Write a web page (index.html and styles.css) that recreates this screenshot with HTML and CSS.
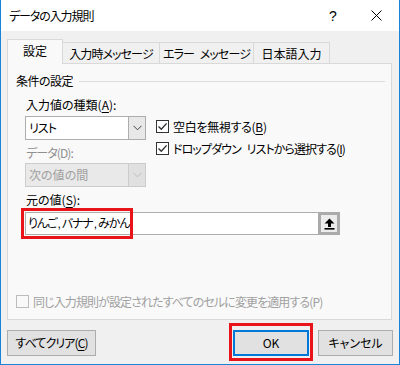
FILE: index.html
```html
<!DOCTYPE html>
<html lang="ja">
<head>
<meta charset="utf-8">
<title>データの入力規則</title>
<link rel="stylesheet" href="styles.css">
</head>
<body>
<div class="window">
  <div class="titlebar">
    <span class="title">データの入力規則</span>
    <span class="help">?</span>
    <span class="close"><svg width="11" height="11" viewBox="0 0 11 11"><path d="M0.5 0.5L10.5 10.5M10.5 0.5L0.5 10.5" stroke="#000" stroke-width="1"/></svg></span>
  </div>
  <div class="content">
    <div class="tabs">
      <div class="tab selected t0">設定</div>
      <div class="tab t1 kana">入力時メッセージ</div>
      <div class="tab t2 kana">エラー メッセージ</div>
      <div class="tab t3">日本語入力</div>
    </div>
    <div class="panel">
      <div class="group-head"><span class="group-text">条件の設定</span><span class="rule"></span></div>
      <div class="conditions">
        <div class="top-row">
          <div class="left-col">
            <div class="label">入力値の種類(<u>A</u>):</div>
            <div class="combo">
              <span class="combo-text kana">リスト</span>
              <span class="combo-btn"><svg width="9" height="6" viewBox="0 0 9 6"><path d="M0.5 0.8L4.5 4.8L8.5 0.8" fill="none" stroke="#444" stroke-width="1"/></svg></span>
            </div>
            <div class="label label-off kana">データ(D):</div>
            <div class="combo combo-off">
              <span class="combo-text">次の値の間</span>
              <span class="combo-btn"><svg width="9" height="6" viewBox="0 0 9 6"><path d="M0.5 0.8L4.5 4.8L8.5 0.8" fill="none" stroke="#bcbcbc" stroke-width="1"/></svg></span>
            </div>
          </div>
          <div class="right-col">
            <div class="check-row">
              <span class="box"><svg width="11" height="11" viewBox="0 0 11 11"><path d="M1.5 5.5L4.3 8.3L9.6 2.4" fill="none" stroke="#333" stroke-width="1.4"/></svg></span>
              <span class="check-text t-blank">空白を無視する(<u>B</u>)</span>
            </div>
            <div class="check-row row2">
              <span class="box"><svg width="11" height="11" viewBox="0 0 11 11"><path d="M1.5 5.5L4.3 8.3L9.6 2.4" fill="none" stroke="#333" stroke-width="1.4"/></svg></span>
              <span class="check-text kana">ドロップダウン リストから選択する(<u>I</u>)</span>
            </div>
          </div>
        </div>
        <div class="label label-src">元の値(<u>S</u>):</div>
        <div class="source-row">
          <div class="source-input"><span class="source-text kana">りんご<span class="comma">,</span>バナナ<span class="comma">,</span>みかん</span><span class="caret"></span></div>
          <div class="pick-btn"><svg width="11" height="12" viewBox="0 0 11 12"><path d="M5.5 0.5L10.5 5.5H7V9H4V5.5H0.5Z" fill="#000"/><rect x="0.5" y="10" width="10" height="1.6" fill="#000"/></svg></div>
          <div class="mark mark-src"></div>
        </div>
      </div>
      <div class="apply-row">
        <span class="box box-off"></span>
        <span class="apply-text kana">同じ入力規則が設定されたすべてのセルに変更を適用する(P)</span>
      </div>
    </div>
    <div class="buttons">
      <div class="btn btn-clear kana">すべてクリア(<u>C</u>)</div>
      <div class="spacer"></div>
      <div class="btn btn-ok">OK<div class="mark mark-ok"></div></div>
      <div class="btn btn-cancel">キャンセル</div>
    </div>
  </div>
</div>
</body>
</html>
```
FILE: styles.css
```css
* { box-sizing: border-box; }
html, body { margin: 0; padding: 0; background: #f0f0f0; }
body {
  font-family: "Noto Sans CJK JP", "Noto Sans", sans-serif;
  font-size: 12px;
  font-feature-settings: "palt";
  color: #000;
}
u { text-decoration-thickness: 1px; text-underline-offset: 2px; }
.kana { letter-spacing: -0.9px; word-spacing: 4px; }

.window {
  width: 400px;
  height: 365px;
  border: 1px solid #1883d7;
  border-top: none;
  display: flex;
  flex-direction: column;
  background: #f0f0f0;
}

.titlebar {
  height: 31px;
  background: #fff;
  display: flex;
  align-items: center;
  flex: none;
}
.title { padding-left: 8px; flex: 1; line-height: 16px; letter-spacing: -1.1px; }
.help {
  font-family: "Liberation Sans", sans-serif;
  font-size: 14px;
  width: 10px;
  margin-right: 32px;
  line-height: 16px;
}
.close { width: 11px; height: 11px; margin-right: 17px; display: flex; }

.content {
  flex: 1;
  padding: 8px 6px 0 6px;
  display: flex;
  flex-direction: column;
}

.tabs {
  display: flex;
  align-items: flex-end;
  height: 24px;
}
.tab {
  height: 21px;
  background: #f0f0f0;
  border-top: 1px solid #d9d9d9;
  border-right: 1px solid #d9d9d9;
  display: flex;
  align-items: center;
  justify-content: center;
  line-height: 16px;
  padding-top: 1px;
}
.tab.selected {
  position: relative;
  z-index: 1;
  height: 25px;
  margin-bottom: -1px;
  background: #f9f9f9;
  border-left: 1px solid #d9d9d9;
  padding-top: 0;
  padding-bottom: 2px;
}
.t0 { width: 56px; }
.t1 { width: 97px; }
.t2 { width: 94px; }
.t3 { width: 76px; }

.panel {
  width: 385px;
  height: 257px;
  border: 1px solid #d9d9d9;
  background: #f9f9f9;
  display: flex;
  flex-direction: column;
}

.group-head {
  display: flex;
  align-items: center;
  margin-top: 9px;
  padding-left: 8px;
  padding-right: 6px;
  line-height: 16px;
}
.group-text { letter-spacing: -0.5px; }
.rule { flex: 1; height: 1px; background: #dcdcdc; margin-left: 6px; }

.conditions { padding-left: 17px; }
.top-row { display: flex; margin-top: 8px; }
.left-col { width: 121px; display: flex; flex-direction: column; }
.label { line-height: 16px; padding-left: 1px; }
.label-off { color: #8f8f8f; margin-top: 5px; }

.combo {
  margin-top: 3px;
  height: 24px;
  border: 1px solid #adadad;
  background: #fff;
  display: flex;
}
.combo-text { flex: 1; padding-left: 3px; line-height: 22px; }
.combo-btn {
  width: 17px;
  border-left: 1px solid #adadad;
  background: #e8e8e8;
  display: flex;
  align-items: center;
  justify-content: center;
}
.combo-off {
  margin-top: 2px;
  background: #e9e9e9;
  border-color: #cccccc;
  color: #a0a0a0;
}
.combo-off .combo-btn { background: #e0e0e0; border-left-color: #cccccc; }

.right-col { margin-left: 10px; padding-top: 23px; }
.check-row { display: flex; align-items: center; height: 13px; }
.check-row.row2 { margin-top: 9px; }
.box {
  width: 13px;
  height: 13px;
  border: 1px solid #333;
  background: #fff;
  display: flex;
  flex: none;
}
.check-text { margin-left: 4px; line-height: 16px; white-space: nowrap; }
.t-blank { letter-spacing: -0.3px; }

.label-src { margin-top: 5px; }
.source-row {
  position: relative;
  display: flex;
  margin-top: 4px;
  width: 315px;
  height: 23px;
}
.source-input {
  flex: 1;
  border: 1px solid #adadad;
  border-right: none;
  background: #fff;
  display: flex;
  align-items: center;
  padding-left: 2px;
}
.source-text { line-height: 16px; white-space: nowrap; letter-spacing: -1.1px; }
.comma { font-family: "Liberation Sans", sans-serif; letter-spacing: 0; margin: 0 1px 0 1px; }
.caret { width: 1px; height: 13px; background: #000; margin-left: 1px; }
.pick-btn {
  width: 22px;
  border: 3px solid #ababab;
  background: #ececec;
  display: flex;
  align-items: center;
  justify-content: center;
}
.mark {
  position: absolute;
  border: 3px solid #e8141a;
}
.mark-src { left: -4px; top: -4px; width: 112px; height: 31px; }

.apply-row {
  margin-top: auto;
  margin-bottom: 11px;
  padding-left: 8px;
  display: flex;
  align-items: center;
  height: 13px;
}
.box-off { border-color: #bcbcbc; background: #f9f9f9; }
.apply-text { margin-left: 4px; color: #a0a0a0; line-height: 16px; white-space: nowrap; }

.buttons {
  display: flex;
  margin-top: 10px;
  height: 26px;
}
.btn {
  height: 26px;
  background: #e1e1e1;
  border: 1px solid #adadad;
  display: flex;
  align-items: center;
  justify-content: center;
  line-height: 16px;
}
.btn-clear { width: 89px; }
.spacer { flex: 1; }
.btn-ok {
  position: relative;
  width: 76px;
  border: 2px solid #0078d7;
  margin-right: 9px;
}
.mark-ok { left: -6px; top: -9px; width: 84px; height: 38px; }
.btn-cancel { width: 75px; }
```
